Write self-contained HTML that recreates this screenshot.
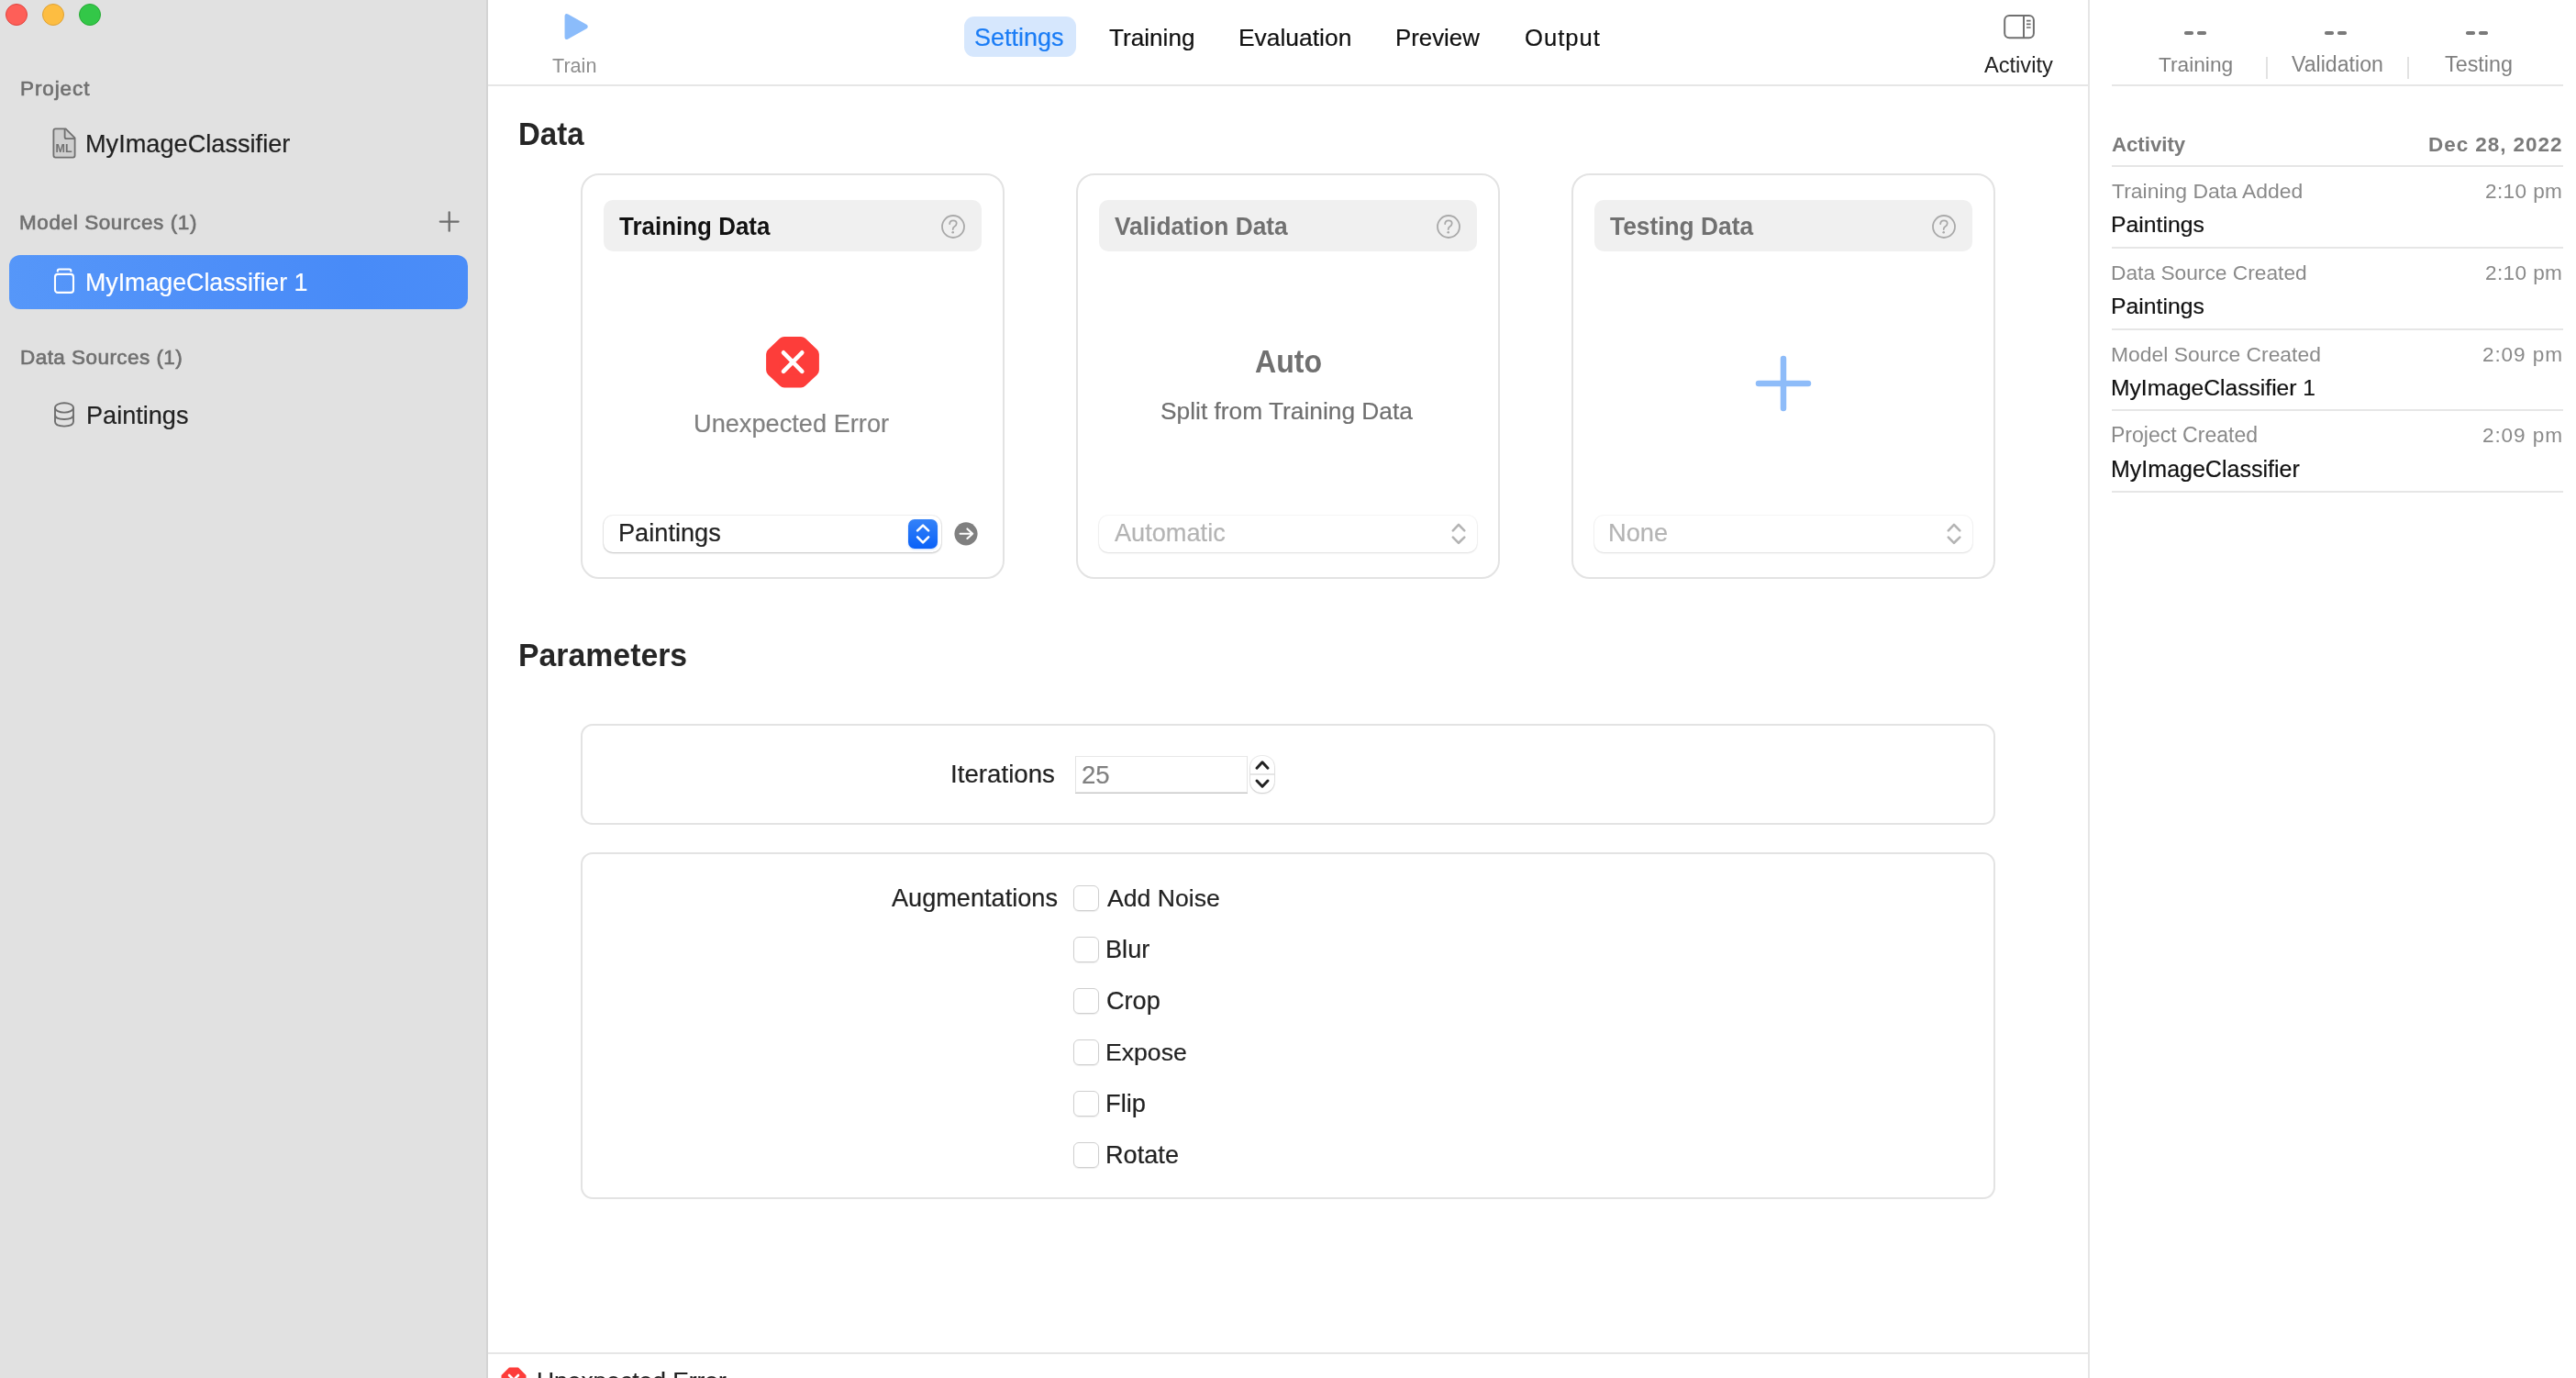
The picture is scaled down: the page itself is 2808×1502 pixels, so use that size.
<!DOCTYPE html><html><head><meta charset="utf-8"><style>
html,body{margin:0;padding:0;width:2808px;height:1502px;overflow:hidden;background:#fff;font-family:"Liberation Sans",sans-serif;}
.t{position:absolute;line-height:1;white-space:nowrap;will-change:transform;-webkit-text-stroke-width:0.2px;}
.b{-webkit-text-stroke-width:0;font-weight:bold;}
.a{position:absolute;box-sizing:border-box;}
svg{position:absolute;overflow:visible;will-change:transform}
</style></head><body>
<div class="a" style="left:0;top:0;width:530px;height:1502px;background:#e1e1e1"></div>
<div class="a" style="left:530px;top:0;width:2px;height:1502px;background:#d4d4d4"></div>
<div class="a" style="left:6px;top:4px;width:24px;height:24px;border-radius:50%;background:#fe5f58;border:1px solid #e0443e"></div>
<div class="a" style="left:46px;top:4px;width:24px;height:24px;border-radius:50%;background:#fdbd41;border:1px solid #dea236"></div>
<div class="a" style="left:86px;top:4px;width:24px;height:24px;border-radius:50%;background:#33c748;border:1px solid #27aa35"></div>
<div class="t" style="left:21.5px;top:86px;font-size:22.5px;color:#707070;-webkit-text-stroke:0.65px #707070;letter-spacing:0.9px">Project</div>
<div class="t" style="left:93.1px;top:143px;font-size:27.16px;color:#222;">MyImageClassifier</div>
<svg style="left:57px;top:139px" width="26" height="34" viewBox="0 0 26 34"><path d="M3.5,1.4 H14.6 L24.6,11.4 V30.6 Q24.6,32.6 22.6,32.6 H3.4 Q1.4,32.6 1.4,30.6 V3.4 Q1.4,1.4 3.5,1.4 Z" fill="#cfcfcf" stroke="#707070" stroke-width="1.8" stroke-linejoin="round"/><path d="M13.6,1.4 V10.2 Q13.6,12.2 15.6,12.2 H24.6" fill="none" stroke="#707070" stroke-width="1.8"/><text x="12.6" y="27.2" text-anchor="middle" font-family="Liberation Sans" font-weight="bold" font-size="12.5" fill="#707070">ML</text></svg>
<div class="t" style="left:21.4px;top:232px;font-size:22.5px;color:#707070;-webkit-text-stroke:0.65px #707070;letter-spacing:0.6px">Model Sources (1)</div>
<div class="a" style="left:10px;top:278px;width:500px;height:59px;border-radius:12px;background:linear-gradient(75deg,#5697f9 0%,#4d8ef8 50%,#488bf8 75%,#4b8df8 100%)"></div>
<div class="t" style="left:92.8px;top:295px;font-size:26.77px;color:#fff;">MyImageClassifier 1</div>
<svg style="left:57px;top:290px" width="26" height="32" viewBox="0 0 26 32"><path d="M5.8,6.6 V5.4 Q5.8,3.6 7.6,3.6 H18.6 Q20.4,3.6 20.4,5.4 V6.6" fill="none" stroke="#fff" stroke-width="2"/><rect x="3" y="8.9" width="20" height="20" rx="3" fill="none" stroke="#fff" stroke-width="2.1"/></svg>
<div class="t" style="left:21.5px;top:379px;font-size:22.5px;color:#707070;-webkit-text-stroke:0.65px #707070;letter-spacing:0.45px">Data Sources (1)</div>
<div class="t" style="left:93.5px;top:439px;font-size:27.1px;color:#222;">Paintings</div>
<svg style="left:57px;top:436px" width="26" height="32" viewBox="0 0 26 32"><g fill="none" stroke="#6e6e6e" stroke-width="1.9"><ellipse cx="13" cy="8.4" rx="10" ry="5.2"/><path d="M3,8.4 V23.6 Q3,28.6 13,28.6 Q23,28.6 23,23.6 V8.4"/><path d="M3,16 Q3,21 13,21 Q23,21 23,16"/></g></svg>
<svg style="left:478px;top:230px" width="24" height="24" viewBox="0 0 24 24"><path d="M11.7,1.5 V21.7 M1.8,11.6 H21.6" stroke="#6e6e6e" stroke-width="2.3" stroke-linecap="round"/></svg>
<div class="a" style="left:532px;top:92px;width:1745px;height:2px;background:#e6e6e6"></div>
<div class="t" style="left:601.7px;top:61px;font-size:21.6px;color:#8e8e8e;-webkit-text-stroke-width:0;">Train</div>
<svg style="left:612px;top:12px" width="32" height="34" viewBox="0 0 32 34"><path d="M4.3,5.6 Q4.3,2.7 6.9,4.1 L27,15.4 Q29,17 27,18.6 L6.9,29.9 Q4.3,31.3 4.3,28.4 Z" fill="#8bbcfb" stroke="#8bbcfb" stroke-width="1.5" stroke-linejoin="round"/></svg>
<svg style="left:2182px;top:14px" width="38" height="30" viewBox="0 0 38 30"><g fill="none" stroke="#707070" stroke-width="2"><rect x="3.2" y="2.9" width="31.7" height="24.3" rx="5"/><path d="M24,3 V27.1"/><path d="M27,8.6 H31.6 M27,12.4 H31.6 M27,16 H31.6" stroke-width="1.6"/></g></svg>
<div class="a" style="left:1051px;top:18px;width:122px;height:44px;border-radius:11px;background:#d6e7fd"></div>
<div class="t" style="left:1062.4px;top:28px;font-size:27.01px;color:#1a7cf5;">Settings</div>
<div class="t" style="left:1208.7px;top:28px;font-size:26.17px;color:#111;">Training</div>
<div class="t" style="left:1349.7px;top:28px;font-size:26.42px;color:#111;">Evaluation</div>
<div class="t" style="left:1520.9px;top:29px;font-size:25.83px;color:#111;">Preview</div>
<div class="t" style="left:1662.3px;top:29px;font-size:25.6px;color:#111;letter-spacing:1.01px;">Output</div>
<div class="t" style="left:2162.7px;top:60px;font-size:23.62px;color:#222;-webkit-text-stroke-width:0;">Activity</div>
<div class="a" style="left:2276px;top:0;width:2px;height:1502px;background:#e6e6e6"></div>
<div class="a" style="left:2302px;top:92px;width:492px;height:2px;background:#e6e6e6"></div>
<div class="t" style="left:2352.9px;top:59px;font-size:22.7px;color:#808080;-webkit-text-stroke-width:0;">Training</div>
<div class="a" style="left:2381px;top:34.4px;width:10.3px;height:3.6px;background:#7a7a7a;border-radius:1.8px"></div>
<div class="a" style="left:2394.7px;top:34.4px;width:10.3px;height:3.6px;background:#7a7a7a;border-radius:1.8px"></div>
<div class="a" style="left:2534px;top:34.4px;width:10.3px;height:3.6px;background:#7a7a7a;border-radius:1.8px"></div>
<div class="a" style="left:2547.7px;top:34.4px;width:10.3px;height:3.6px;background:#7a7a7a;border-radius:1.8px"></div>
<div class="a" style="left:2688px;top:34.4px;width:10.3px;height:3.6px;background:#7a7a7a;border-radius:1.8px"></div>
<div class="a" style="left:2701.7px;top:34.4px;width:10.3px;height:3.6px;background:#7a7a7a;border-radius:1.8px"></div>
<div class="a" style="left:2470px;top:62px;width:2px;height:24px;background:#e2e2e2"></div>
<div class="a" style="left:2624px;top:62px;width:2px;height:24px;background:#e2e2e2"></div>
<div class="t" style="left:2497.6px;top:59px;font-size:23.14px;color:#808080;-webkit-text-stroke-width:0;">Validation</div>
<div class="t" style="left:2664.5px;top:59px;font-size:23.37px;color:#808080;-webkit-text-stroke-width:0;">Testing</div>
<div class="t b" style="left:2302.0px;top:147px;font-size:22.2px;color:#7a7a7a;">Activity</div>
<div class="t b" style="left:2646.8px;top:147px;font-size:22.5px;color:#7a7a7a;letter-spacing:0.94px;">Dec 28, 2022</div>
<div class="a" style="left:2302px;top:180px;width:492px;height:2px;background:#e6e6e6"></div>
<div class="t" style="left:2302.1px;top:197px;font-size:22.95px;color:#8a8a8a;-webkit-text-stroke-width:0;">Training Data Added</div>
<div class="t" style="left:2709.1px;top:198px;font-size:22.6px;color:#8a8a8a;letter-spacing:0.38px;-webkit-text-stroke-width:0;">2:10 pm</div>
<div class="t" style="left:2300.6px;top:233px;font-size:24.78px;color:#111;">Paintings</div>
<div class="a" style="left:2302px;top:269px;width:492px;height:2px;background:#e6e6e6"></div>
<div class="t" style="left:2300.7px;top:286px;font-size:22.75px;color:#8a8a8a;-webkit-text-stroke-width:0;">Data Source Created</div>
<div class="t" style="left:2709.1px;top:287px;font-size:22.6px;color:#8a8a8a;letter-spacing:0.38px;-webkit-text-stroke-width:0;">2:10 pm</div>
<div class="t" style="left:2300.6px;top:322px;font-size:24.78px;color:#111;">Paintings</div>
<div class="a" style="left:2302px;top:358px;width:492px;height:2px;background:#e6e6e6"></div>
<div class="t" style="left:2300.7px;top:375px;font-size:22.88px;color:#8a8a8a;-webkit-text-stroke-width:0;">Model Source Created</div>
<div class="t" style="left:2706.0px;top:376px;font-size:22.6px;color:#8a8a8a;letter-spacing:0.89px;-webkit-text-stroke-width:0;">2:09 pm</div>
<div class="t" style="left:2300.6px;top:411px;font-size:24.64px;color:#111;">MyImageClassifier 1</div>
<div class="a" style="left:2302px;top:446px;width:492px;height:2px;background:#e6e6e6"></div>
<div class="t" style="left:2300.7px;top:463px;font-size:23.04px;color:#8a8a8a;-webkit-text-stroke-width:0;">Project Created</div>
<div class="t" style="left:2706.0px;top:464px;font-size:22.6px;color:#8a8a8a;letter-spacing:0.89px;-webkit-text-stroke-width:0;">2:09 pm</div>
<div class="t" style="left:2300.5px;top:499px;font-size:25.03px;color:#111;">MyImageClassifier</div>
<div class="a" style="left:2302px;top:535px;width:492px;height:2px;background:#e6e6e6"></div>
<div class="t b" style="left:564.6px;top:130px;font-size:33px;color:#262626;transform:scaleY(1.07);transform-origin:0 28px;">Data</div>
<div class="a" style="left:633px;top:189px;width:462px;height:442px;border:2px solid #e3e3e3;border-radius:20px"></div>
<div class="a" style="left:658px;top:218px;width:412px;height:56px;border-radius:10px;background:#f0f0f0"></div>
<div class="t b" style="left:675.2px;top:235px;font-size:25.96px;color:#111;transform:scaleY(1.075);transform-origin:0 21px;">Training Data</div>
<svg style="left:1024px;top:232px" width="30" height="30" viewBox="0 0 30 30"><circle cx="15" cy="15" r="12" fill="none" stroke="#a9a9a9" stroke-width="1.8"/><path d="M11.2,12.1 Q11.2,8.3 15,8.3 Q18.7,8.3 18.7,11.6 Q18.7,13.6 16.4,15 Q14.7,16.1 14.7,18" fill="none" stroke="#a9a9a9" stroke-width="1.8" stroke-linecap="round"/><circle cx="14.7" cy="21.2" r="1.3" fill="#a9a9a9"/></svg>
<div class="a" style="left:658px;top:562px;width:368px;height:40px;border-radius:10px;background:#fff;box-shadow:0 0 0 1px rgba(0,0,0,.06), 0 1px 2px rgba(0,0,0,.2)"></div>
<div class="a" style="left:1173px;top:189px;width:462px;height:442px;border:2px solid #e3e3e3;border-radius:20px"></div>
<div class="a" style="left:1198px;top:218px;width:412px;height:56px;border-radius:10px;background:#f0f0f0"></div>
<div class="t b" style="left:1215.3px;top:234px;font-size:26.33px;color:#707070;transform:scaleY(1.075);transform-origin:0 22px;">Validation Data</div>
<svg style="left:1564px;top:232px" width="30" height="30" viewBox="0 0 30 30"><circle cx="15" cy="15" r="12" fill="none" stroke="#a9a9a9" stroke-width="1.8"/><path d="M11.2,12.1 Q11.2,8.3 15,8.3 Q18.7,8.3 18.7,11.6 Q18.7,13.6 16.4,15 Q14.7,16.1 14.7,18" fill="none" stroke="#a9a9a9" stroke-width="1.8" stroke-linecap="round"/><circle cx="14.7" cy="21.2" r="1.3" fill="#a9a9a9"/></svg>
<div class="a" style="left:1198px;top:562px;width:412px;height:40px;border-radius:10px;background:#fff;box-shadow:0 0 0 1px rgba(0,0,0,.035), 0 1px 2px rgba(0,0,0,.1)"></div>
<svg style="left:1578px;top:566px" width="24" height="32" viewBox="0 0 24 32"><path d="M5.8,12.4 L12,5.9 L18.3,12.4 M5.8,19.6 L12,25.8 L18.3,19.6" fill="none" stroke="#b4b4b4" stroke-width="2.6" stroke-linecap="round" stroke-linejoin="round"/></svg>
<div class="a" style="left:1713px;top:189px;width:462px;height:442px;border:2px solid #e3e3e3;border-radius:20px"></div>
<div class="a" style="left:1738px;top:218px;width:412px;height:56px;border-radius:10px;background:#f0f0f0"></div>
<div class="t b" style="left:1755.2px;top:234px;font-size:26.34px;color:#707070;transform:scaleY(1.075);transform-origin:0 22px;">Testing Data</div>
<svg style="left:2104px;top:232px" width="30" height="30" viewBox="0 0 30 30"><circle cx="15" cy="15" r="12" fill="none" stroke="#a9a9a9" stroke-width="1.8"/><path d="M11.2,12.1 Q11.2,8.3 15,8.3 Q18.7,8.3 18.7,11.6 Q18.7,13.6 16.4,15 Q14.7,16.1 14.7,18" fill="none" stroke="#a9a9a9" stroke-width="1.8" stroke-linecap="round"/><circle cx="14.7" cy="21.2" r="1.3" fill="#a9a9a9"/></svg>
<div class="a" style="left:1738px;top:562px;width:412px;height:40px;border-radius:10px;background:#fff;box-shadow:0 0 0 1px rgba(0,0,0,.035), 0 1px 2px rgba(0,0,0,.1)"></div>
<svg style="left:2118px;top:566px" width="24" height="32" viewBox="0 0 24 32"><path d="M5.8,12.4 L12,5.9 L18.3,12.4 M5.8,19.6 L12,25.8 L18.3,19.6" fill="none" stroke="#b4b4b4" stroke-width="2.6" stroke-linecap="round" stroke-linejoin="round"/></svg>
<svg style="left:830px;top:360px" width="68" height="70" viewBox="0 0 68 70"><path d="M24.93,13.95 H43.07 L55.9,26.1 V43.3 L43.07,55.45 H24.93 L12.1,43.3 V26.1 Z" fill="#fd3d3a" stroke="#fd3d3a" stroke-width="14" stroke-linejoin="round"/><path d="M24,24.3 L44.3,44.9 M44.3,24.3 L24,44.9" stroke="#fff" stroke-width="4.6" stroke-linecap="round"/></svg>
<div class="t" style="left:756.3px;top:448px;font-size:27.2px;color:#808080;">Unexpected Error</div>
<div class="a" style="left:990px;top:566px;width:32px;height:32px;border-radius:7px;background:linear-gradient(#3482f8,#0a61f8);box-shadow:0 1px 2px rgba(10,97,248,.25)"></div>
<svg style="left:990px;top:566px" width="32" height="32" viewBox="0 0 32 32"><path d="M10.1,12.4 L16.1,6.6 L22.1,12.4 M10.1,19.3 L16.1,25.3 L22.1,19.3" fill="none" stroke="#fff" stroke-width="2.6" stroke-linecap="round" stroke-linejoin="round"/></svg>
<svg style="left:1040px;top:569px" width="26" height="26" viewBox="0 0 26 26"><circle cx="13" cy="12.8" r="12.6" fill="#808080"/><path d="M6.6,12.8 H20.2 M14.4,7.4 L20.2,12.8 L14.4,18" fill="none" stroke="#fff" stroke-width="2.1" stroke-linecap="round" stroke-linejoin="round"/></svg>
<div class="t" style="left:673.5px;top:567px;font-size:27.18px;color:#222;">Paintings</div>
<div class="t b" style="left:1367.8px;top:379px;font-size:32.08px;color:#707070;transform:scaleY(1.07);transform-origin:0 27px;">Auto</div>
<div class="t" style="left:1264.8px;top:435px;font-size:26.32px;color:#707070;">Split from Training Data</div>
<div class="t" style="left:1214.9px;top:567px;font-size:27.16px;color:#b4b4b4;">Automatic</div>
<div class="t" style="left:1752.8px;top:567px;font-size:27.29px;color:#b4b4b4;">None</div>
<svg style="left:1910px;top:384px" width="68" height="68" viewBox="0 0 68 68"><path d="M34,7 V61 M7,34 H61" stroke="#8ebcf9" stroke-width="6.5" stroke-linecap="round"/></svg>
<div class="t b" style="left:564.5px;top:698px;font-size:33.8px;color:#262626;transform:scaleY(1.035);transform-origin:0 28px;">Parameters</div>
<div class="a" style="left:633px;top:789px;width:1542px;height:110px;border:2px solid #e3e3e3;border-radius:13px"></div>
<div class="t" style="left:1036.4px;top:830px;font-size:27.71px;color:#222;">Iterations</div>
<div class="a" style="left:1172px;top:824px;width:188px;height:40px;background:#fff;border:1px solid #e4e4e4;border-top-color:#e8e8e8;box-shadow:0 1px 0 #c6c6c6"></div>
<div class="t" style="left:1179.3px;top:831px;font-size:27.65px;color:#808080;">25</div>
<div class="a" style="left:1363px;top:824px;width:26px;height:40px;border-radius:12px;background:#fff;box-shadow:0 0 0 1px rgba(0,0,0,.08), 0 1px 2px rgba(0,0,0,.15)"></div>
<div class="a" style="left:1363px;top:843px;width:26px;height:2px;background:#e6e6e6"></div>
<svg style="left:1363px;top:824px" width="26" height="40" viewBox="0 0 26 40"><path d="M7,13.2 L13,6.8 L19,13.2 M7,27 L13,33.2 L19,27" fill="none" stroke="#222" stroke-width="3" stroke-linecap="round" stroke-linejoin="round"/></svg>
<div class="a" style="left:633px;top:929px;width:1542px;height:378px;border:2px solid #e3e3e3;border-radius:13px"></div>
<div class="t" style="left:971.9px;top:965px;font-size:27.14px;color:#222;">Augmentations</div>
<div class="a" style="left:1170px;top:965px;width:28px;height:28px;border-radius:6px;border:1px solid #cfcfcf;box-shadow:0 1px 1px rgba(0,0,0,.08)"></div>
<div class="t" style="left:1207.1px;top:966px;font-size:26.64px;color:#222;">Add Noise</div>
<div class="a" style="left:1170px;top:1021px;width:28px;height:28px;border-radius:6px;border:1px solid #cfcfcf;box-shadow:0 1px 1px rgba(0,0,0,.08)"></div>
<div class="t" style="left:1205.0px;top:1021px;font-size:27.15px;color:#222;">Blur</div>
<div class="a" style="left:1170px;top:1077px;width:28px;height:28px;border-radius:6px;border:1px solid #cfcfcf;box-shadow:0 1px 1px rgba(0,0,0,.08)"></div>
<div class="t" style="left:1205.8px;top:1077px;font-size:27.14px;color:#222;">Crop</div>
<div class="a" style="left:1170px;top:1133px;width:28px;height:28px;border-radius:6px;border:1px solid #cfcfcf;box-shadow:0 1px 1px rgba(0,0,0,.08)"></div>
<div class="t" style="left:1205.0px;top:1134px;font-size:26.61px;color:#222;">Expose</div>
<div class="a" style="left:1170px;top:1189px;width:28px;height:28px;border-radius:6px;border:1px solid #cfcfcf;box-shadow:0 1px 1px rgba(0,0,0,.08)"></div>
<div class="t" style="left:1205.0px;top:1189px;font-size:27.3px;color:#222;">Flip</div>
<div class="a" style="left:1170px;top:1245px;width:28px;height:28px;border-radius:6px;border:1px solid #cfcfcf;box-shadow:0 1px 1px rgba(0,0,0,.08)"></div>
<div class="t" style="left:1205.0px;top:1245px;font-size:27.16px;color:#222;">Rotate</div>
<div class="a" style="left:532px;top:1474px;width:1745px;height:2px;background:#e6e6e6"></div>
<div class="t" style="left:585.3px;top:1492px;font-size:26.4px;color:#222;">Unexpected Error</div>
<svg style="left:545px;top:1489px" width="30" height="30" viewBox="0 0 30 30"><path d="M10.5,2.5 H19.5 L27.5,10.5 V19.5 L19.5,27.5 H10.5 L2.5,19.5 V10.5 Z" fill="#fd3d3a" stroke="#fd3d3a" stroke-width="2" stroke-linejoin="round"/><path d="M10,10 L20,20 M20,10 L10,20" stroke="#fff" stroke-width="2.6" stroke-linecap="round"/></svg>
</body></html>
